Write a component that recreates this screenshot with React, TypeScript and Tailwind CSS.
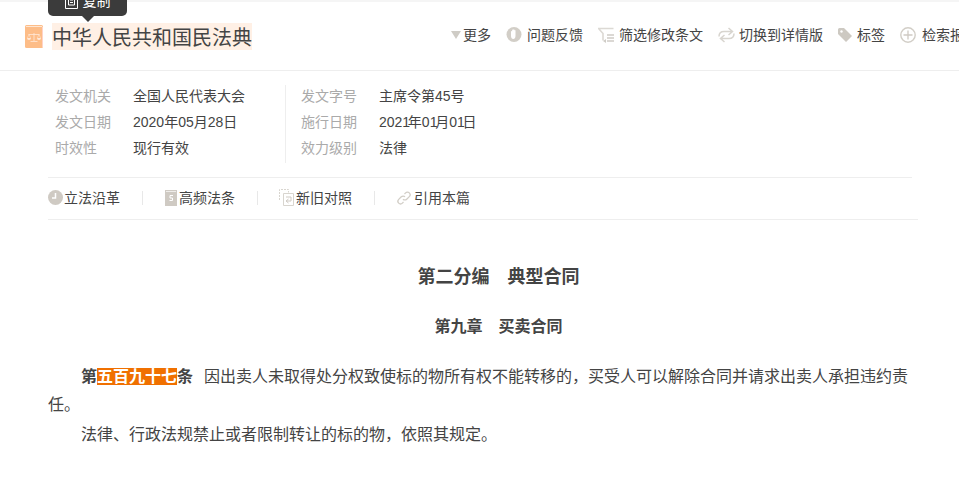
import { ReactNode } from "react";

const Caret = () => (
  <svg width="10" height="8" viewBox="0 0 10 8" className="shrink-0">
    <path d="M0 0h10L5 8z" fill="#cfccc6" />
  </svg>
);

const Feedback = () => (
  <svg width="16" height="17" viewBox="0 0 16 17" className="shrink-0">
    <circle cx="8" cy="8.500" r="7.500" fill="#d2cec7" />
    <path d="M5 8V5.500c0-.8 1.100-.8 1.100 0V4.200c0-.8 1.100-.8 1.100 0V3.800c0-.8 1.200-.8 1.200 0v.8c0-.8 1.100-.8 1.100 0v5.200c0 2.100-1 3.200-2.300 3.200C6 13 5 11.800 5 10z" fill="#fff" />
  </svg>
);

const Filter = () => (
  <svg width="17" height="16" viewBox="0 0 17 16" fill="none" className="shrink-0">
    <path d="M0 1.500h15.500M1 2l4 4.500v7" stroke="#dcd9d4" strokeWidth="1.600" />
    <path d="M9 8h7M9 11h7M9 14h7" stroke="#cfccc6" strokeWidth="1.400" />
    <path d="M5 14l3-2v4z" fill="#cfccc6" />
  </svg>
);

const Swap = () => (
  <svg width="17" height="16" viewBox="0 0 17 16" fill="none" className="shrink-0">
    <path d="M1 9.500C1 6 3 4.500 6 4.500h8M10.500 1l4 3.500-4 3.500" stroke="#d8d5cf" strokeWidth="1.500" />
    <path d="M16 6.500c0 3.500-2 5-5 5H3M6.500 8l-4 3.500 4 3.500" stroke="#d8d5cf" strokeWidth="1.500" />
  </svg>
);

const Tag = () => (
  <svg width="14" height="14" viewBox="0 0 14 14" className="shrink-0">
    <path d="M0 1.500A1.500 1.500 0 0 1 1.500 0H6l8 8-6 6-8-8z" fill="#cdc9c2" />
    <circle cx="3.500" cy="3.500" r="1.200" fill="#fff" />
  </svg>
);

const PlusCircle = () => (
  <svg width="16" height="16" viewBox="0 0 16 16" fill="none" className="shrink-0">
    <circle cx="8" cy="8" r="7.200" stroke="#d2cec7" strokeWidth="1.400" />
    <path d="M8 3.500v9M3.500 8h9" stroke="#cfcac3" strokeWidth="1.300" />
  </svg>
);

const Clock = () => (
  <svg width="15" height="15" viewBox="0 0 15 15" fill="none" className="shrink-0">
    <circle cx="7.500" cy="7.500" r="7.500" fill="#cfcac3" />
    <path d="M7.500 3v5H4" stroke="#fff" strokeWidth="1.500" />
  </svg>
);

const Statute = () => (
  <svg width="12" height="16" viewBox="0 0 12 16" className="shrink-0">
    <path d="M0 0h12v16H0z" fill="#cfcac3" />
    <path d="M1 1.500h10" stroke="#efedea" />
    <path d="M8 5.500H5v2.500h2.500v2.500H4.500" stroke="#fff" strokeWidth="1" fill="none" />
  </svg>
);

const Compare = () => (
  <svg width="15" height="17" viewBox="0 0 15 17" fill="none" className="-ml-px shrink-0">
    <path d="M.5 11V.5h9v3" stroke="#d8d5cf" strokeDasharray="2 1" />
    <path d="M4.500 4.500h10v12h-10z" stroke="#d8d5cf" />
    <path d="M7 8h5v4H7.500M9.500 10l-2.500 2 2.500 2" stroke="#cfcac3" />
  </svg>
);

const LinkIcon = () => (
  <svg width="14" height="14" viewBox="0 0 14 14" fill="none" className="shrink-0">
    <path d="M6 8.200a2.600 2.600 0 0 0 3.700 0l2.600-2.600a2.600 2.600 0 0 0-3.700-3.700L7.500 3" stroke="#d2cec7" strokeWidth="1.300" />
    <path d="M8 5.800a2.600 2.600 0 0 0-3.700 0l-2.600 2.600a2.600 2.600 0 0 0 3.700 3.700L6.500 11" stroke="#d2cec7" strokeWidth="1.300" />
  </svg>
);

const Book = () => (
  <svg width="18" height="23" viewBox="0 0 18 23" className="shrink-0">
    <rect width="18" height="23" rx="1.500" fill="#fdbd88" />
    <path d="M1 1.500h16" stroke="#ffe6d2" strokeWidth="1" />
    <path d="M17.500 2v20" stroke="#ffd3c8" strokeWidth="1" />
    <path d="M9 8v8M5.500 16.500h7M3.500 9.500h11" stroke="#ffe9d8" strokeWidth=".8" />
    <path d="M2 13h4a2 2 0 0 1-4 0zM12 13h4a2 2 0 0 1-4 0z" fill="#ffe9d8" />
    <path d="M4 9.500L2.300 13M4 9.500L5.700 13M14 9.500L12.300 13M14 9.500L15.700 13" stroke="#ffe9d8" strokeWidth=".5" />
  </svg>
);

const actions: { icon: ReactNode; label: string; gap: string; ml: string }[] = [
  { icon: <Caret />, label: "更多", gap: "gap-[2px]", ml: "ml-0" },
  { icon: <Feedback />, label: "问题反馈", gap: "gap-[5px]", ml: "ml-[15px]" },
  { icon: <Filter />, label: "筛选修改条文", gap: "gap-[4px]", ml: "ml-[15px]" },
  { icon: <Swap />, label: "切换到详情版", gap: "gap-1", ml: "ml-[15px]" },
  { icon: <Tag />, label: "标签", gap: "gap-[5px]", ml: "ml-[15px]" },
  { icon: <PlusCircle />, label: "检索报告", gap: "gap-[6px]", ml: "ml-[15px]" },
];

// the "1" is narrower in the reference's font
const Narrow1 = () => <span className="tracking-[-2.3px]">1</span>;

const meta: [string, ReactNode][][] = [
  [
    ["发文机关", "全国人民代表大会"],
    ["发文日期", "2020年05月28日"],
    ["时效性", "现行有效"],
  ],
  [
    ["发文字号", "主席令第45号"],
    ["施行日期", <>202<Narrow1 />年0<Narrow1 />月0<Narrow1 />日</>],
    ["效力级别", "法律"],
  ],
];

const tools: { icon: ReactNode; label: string; gap: string }[] = [
  { icon: <Clock />, label: "立法沿革", gap: "gap-px" },
  { icon: <Statute />, label: "高频法条", gap: "gap-[2px]" },
  { icon: <Compare />, label: "新旧对照", gap: "gap-[2px]" },
  { icon: <LinkIcon />, label: "引用本篇", gap: "gap-[3px]" },
];

export default function App() {
  return (
    <div
      className="relative h-[481px] w-[959px] overflow-hidden bg-white text-[#444]"
      style={{ fontFamily: '"Liberation Sans", "Noto Sans CJK SC", sans-serif' }}
    >
      <div className="h-[2px] bg-[#f5f5f5]" />

      {/* copy tooltip, pushed off the top of the page */}
      <div className="absolute left-[48px] top-[-14px] flex h-[30px] w-[79px] items-center justify-center gap-[5px] rounded-[5px] bg-[#3b3b3b] text-sm text-white">
        <svg width="13" height="16" viewBox="0 0 13 16" fill="none">
          <path d="M.5.500h12v15H.5z" stroke="#fff" />
          <path d="M3.500 4h6v8h-6z" stroke="#fff" />
          <path d="M5 7h3M5 9.500h3" stroke="#fff" />
        </svg>
        复制
      </div>
      <div className="absolute left-[82px] top-[16px] h-0 w-0 border-x-[6px] border-t-[6px] border-x-transparent border-t-[#3b3b3b]" />

      <header className="flex h-[69px] items-center whitespace-nowrap border-b border-[#eee] pl-[25px]">
        <Book />
        <h1 className="ml-[9px] h-[27px] w-[200px] bg-[#fff0e5] text-xl font-normal leading-[30px]">
          中华人民共和国民法典
        </h1>
        <div className="mb-[3px] ml-[199px] flex shrink-0 items-center text-sm">
          {actions.map((a) => (
            <span key={a.label} className={`flex items-center ${a.gap} ${a.ml}`}>
              {a.icon}
              {a.label}
            </span>
          ))}
        </div>
      </header>

      <div className="flex pl-[55px] pt-[14px] text-sm leading-[22px]">
        {meta.map((col, i) => (
          <div key={i} className={i === 0 ? "w-[231px] border-r border-[#eee]" : "pl-[15px]"}>
            {col.map(([k, v]) => (
              <div key={k} className="flex h-[26px]">
                <span className="w-[78px] text-[#aaa]">{k}</span>
                <span>{v}</span>
              </div>
            ))}
          </div>
        ))}
      </div>

      <div className="ml-[48px] mt-[14px] w-[864px] border-t border-[#eee]" />
      <div className="ml-[48px] flex h-[42px] w-[870px] items-center border-b border-[#eee] pb-[2px] text-sm">
        {tools.map((t, i) => (
          <div key={t.label} className="flex items-center">
            {i > 0 && <span className="mx-[22px] h-[14px] w-px bg-[#e8e8e8]" />}
            <span className={`flex items-center ${t.gap}`}>
              {t.icon}
              {t.label}
            </span>
          </div>
        ))}
      </div>

      <div className="ml-[48px] w-[901px] pt-[43px] text-center font-bold">
        <h2 className="text-lg leading-[28px]">第二分编　典型合同</h2>
        <h3 className="mt-[22px] text-base leading-[28px]">第九章　买卖合同</h3>
      </div>

      <div className="ml-[48px] mt-[22px] w-[868px] text-base leading-[28px]">
        <p className="indent-[33px]">
          <b>第</b>
          <b className="bg-[#f07000] text-white">五百九十七</b>
          <b>条</b>
          <span className="ml-[11px]">
            因出卖人未取得处分权致使标的物所有权不能转移的，买受人可以解除合同并请求出卖人承担违约责任。
          </span>
        </p>
        <p className="mt-[2px] indent-[33px]">法律、行政法规禁止或者限制转让的标的物，依照其规定。</p>
      </div>
    </div>
  );
}
